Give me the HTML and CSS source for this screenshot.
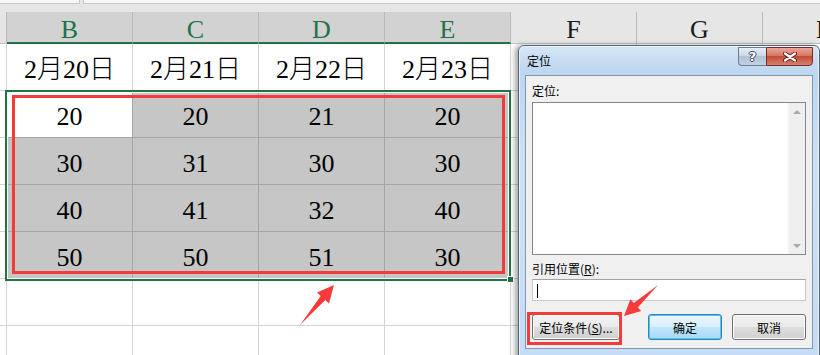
FILE: index.html
```html
<!DOCTYPE html>
<html lang="zh-CN">
<head>
    <meta charset="UTF-8">
    <title>定位</title>
    <link rel="stylesheet" href="styles.css">
</head>
<body>
    <!-- formula bar remains -->
    <div class="topbar">
        <div class="namebox"></div>
        <div class="formula"></div>
    </div>

    <!-- worksheet -->
    <div class="sheet">
        <div class="hd"></div>
        <div class="hd sel">B</div>
        <div class="hd sel">C</div>
        <div class="hd sel">D</div>
        <div class="hd sel">E</div>
        <div class="hd">F</div>
        <div class="hd">G</div>
        <div class="hd">H</div>

        <div class="c"></div>
        <div class="c date">2月20日</div>
        <div class="c date">2月21日</div>
        <div class="c date">2月22日</div>
        <div class="c date">2月23日</div>
        <div class="c"></div>
        <div class="c"></div>
        <div class="c"></div>

        <div class="c"></div>
        <div class="c on act">20</div>
        <div class="c on">20</div>
        <div class="c on">21</div>
        <div class="c on">20</div>
        <div class="c"></div>
        <div class="c"></div>
        <div class="c"></div>

        <div class="c"></div>
        <div class="c on">30</div>
        <div class="c on">31</div>
        <div class="c on">30</div>
        <div class="c on">30</div>
        <div class="c"></div>
        <div class="c"></div>
        <div class="c"></div>

        <div class="c"></div>
        <div class="c on">40</div>
        <div class="c on">41</div>
        <div class="c on">32</div>
        <div class="c on">40</div>
        <div class="c"></div>
        <div class="c"></div>
        <div class="c"></div>

        <div class="c"></div>
        <div class="c on">50</div>
        <div class="c on">50</div>
        <div class="c on">51</div>
        <div class="c on">30</div>
        <div class="c"></div>
        <div class="c"></div>
        <div class="c"></div>

        <div class="c"></div>
        <div class="c"></div>
        <div class="c"></div>
        <div class="c"></div>
        <div class="c"></div>
        <div class="c"></div>
        <div class="c"></div>
        <div class="c"></div>

        <div class="c"></div>
        <div class="c"></div>
        <div class="c"></div>
        <div class="c"></div>
        <div class="c"></div>
        <div class="c"></div>
        <div class="c"></div>
        <div class="c"></div>
    </div>

    <!-- selection frame over B3:E6 -->
    <div class="selection"></div>
    <div class="fill_handle"></div>
    <div class="mark range_mark"></div>

    <!-- Go To dialog -->
    <div class="dialog">
        <div class="titlebar">
            <span class="title">定位</span>
            <div class="caption_btns">
                <div class="help">?</div>
                <div class="close">
                    <svg width="14" height="10" viewBox="0 0 14 10">
                        <path d="M2 1.5 L12 8.5 M12 1.5 L2 8.5" stroke="#5a1d16" stroke-width="4" stroke-linecap="round"/>
                        <path d="M2 1.5 L12 8.5 M12 1.5 L2 8.5" stroke="#fff" stroke-width="2.2" stroke-linecap="round"/>
                    </svg>
                </div>
            </div>
        </div>
        <div class="client">
            <div class="label">定位:</div>
            <div class="listbox">
                <div class="list_area"></div>
                <div class="scroll">
                    <span class="arrow up"></span>
                    <span class="arrow down"></span>
                </div>
            </div>
            <div class="label second">引用位置(<u>R</u>):</div>
            <div class="textbox"><span class="caret"></span></div>
            <div class="buttons">
                <div class="btn wide">定位条件(<u>S</u>)...</div>
                <div class="btn ok">确定</div>
                <div class="btn">取消</div>
            </div>
        </div>
    </div>

    <div class="mark btn_mark"></div>

    <!-- annotation arrows -->
    <svg class="arrows" width="820" height="355" viewBox="0 0 820 355">
        <polygon points="300,325 325.3,300 329,303.5 334,285 317,292.5 320.7,296" fill="#f83a3a"/>
        <polygon points="658,285 637.8,307.4 641.2,311.1 624,316 630.4,299.3 633.8,303" fill="#f83a3a"/>
    </svg>
</body>
</html>
```

FILE: styles.css
```css
* {
    margin: 0;
    padding: 0;
    box-sizing: border-box;
}
body {
    width: 820px;
    height: 355px;
    overflow: hidden;
    position: relative;
    background: #fff;
    font-family: "Liberation Serif", "Noto Sans CJK SC", serif;
    color: #000;
}
/* formula bar strip */
.topbar {
    display: flex;
    height: 12px;
    background: #e6e6e6;
}
.topbar .namebox {
    width: 80px;
    height: 4px;
    background: #f7f7f7;
    border-right: 1px solid #c6c6c6;
    border-bottom: 1px solid #c6c6c6;
}
.topbar .formula {
    flex: 1;
    height: 4px;
    margin-left: 3px;
    background: #f7f7f7;
    border-left: 1px solid #c6c6c6;
    border-bottom: 1px solid #c6c6c6;
}
/* worksheet grid */
.sheet {
    display: grid;
    grid-template-columns: 7px repeat(7, 126px);
    grid-template-rows: 32px repeat(7, 47px);
}
.hd {
    background: #e6e6e6;
    border-right: 1px solid #bababa;
    border-bottom: 1px solid #c4c4c4;
    font-size: 26px;
    line-height: 28px;
    padding-top: 4px;
    text-align: center;
    color: #1a1a1a;
    overflow: hidden;
}
.hd.sel {
    background: #d2d2d2;
    color: #217346;
    border-bottom: 2px solid #217346;
}
.c {
    border-right: 1px solid #d4d4d4;
    border-bottom: 1px solid #d4d4d4;
    font-size: 26px;
    line-height: 40px;
    padding-top: 6px;
    text-align: center;
    white-space: nowrap;
}
.c.date {
    font-weight: 300;
}
.c.on {
    background: #c6c6c6;
    border-color: #a6a6a6;
}
.c.act {
    background: #fff;
}
/* selection */
.selection {
    position: absolute;
    left: 5px;
    top: 90px;
    width: 506px;
    height: 191px;
    border: 2px solid #217346;
    box-shadow: inset 0 0 0 1px #fff;
}
.fill_handle {
    position: absolute;
    left: 507px;
    top: 276px;
    width: 7px;
    height: 7px;
    background: #217346;
    border: 1px solid #fff;
}
/* red annotation boxes */
.mark {
    position: absolute;
    border: 3px solid #f23c3c;
}
.range_mark {
    left: 12px;
    top: 95px;
    width: 493px;
    height: 179px;
}
.btn_mark {
    left: 527px;
    top: 312px;
    width: 95px;
    height: 33px;
}
.arrows {
    position: absolute;
    left: 0;
    top: 0;
    pointer-events: none;
}
/* dialog window */
.dialog {
    position: absolute;
    left: 518px;
    top: 45px;
    width: 302px;
    height: 320px;
    padding: 0 6px;
    border: 1px solid #56677a;
    border-radius: 6px 6px 0 0;
    background: linear-gradient(to bottom, #d6e6f6 0, #c0d8f1 22px, #bdd7f2 30px, #cbe1f7 120px, #c4dcf5 100%);
    box-shadow: -3px 0 5px rgba(0, 0, 0, 0.35), inset 0 0 0 1px rgba(255, 255, 255, 0.6);
    font-family: "Noto Sans CJK SC", sans-serif;
    font-size: 12px;
}
.titlebar {
    height: 29px;
    display: flex;
    align-items: flex-start;
}
.titlebar .title {
    margin-top: 7px;
    padding-left: 2px;
    line-height: 16px;
    color: #000;
}
.caption_btns {
    margin-left: auto;
    margin-top: 1px;
    display: flex;
}
.help {
    width: 28px;
    height: 19px;
    border: 1px solid #6b7d91;
    border-right: none;
    border-radius: 0 0 0 4px;
    background: linear-gradient(to bottom, #e6eef7 0, #ccd8e6 45%, #b1c2d6 50%, #c2d1e2 100%);
    color: #fff;
    font-family: "DejaVu Sans", sans-serif;
    font-weight: bold;
    font-size: 13px;
    line-height: 17px;
    text-align: center;
    text-shadow: 1px 0 0 #39475a, -1px 0 0 #39475a, 0 1px 0 #39475a, 0 -1px 0 #39475a;
}
.close {
    width: 47px;
    height: 19px;
    border: 1px solid #7c2a22;
    border-radius: 0 0 4px 0;
    background: linear-gradient(to bottom, #eaa79b 0, #d87564 45%, #c44b36 50%, #d3826f 100%);
    display: flex;
    align-items: center;
    justify-content: center;
}
.client {
    height: 274px;
    background: #f0f0f0;
    border: 1px solid #8596a8;
    padding: 7px 6px 0;
    display: flex;
    flex-direction: column;
}
.label {
    line-height: 16px;
    color: #000;
}
.label.second {
    margin-top: 6px;
}
.listbox {
    margin-top: 3px;
    height: 153px;
    display: flex;
    background: #fff;
    border: 1px solid #828790;
}
.list_area {
    flex: 1;
}
.scroll {
    width: 17px;
    background: #efefef;
    border-left: 1px solid #f4f4f4;
    display: flex;
    flex-direction: column;
    justify-content: space-between;
    align-items: center;
    padding: 7px 0 6px;
}
.arrow {
    width: 0;
    height: 0;
    border-left: 4px solid transparent;
    border-right: 4px solid transparent;
}
.arrow.up {
    border-bottom: 4px solid #a9a9a9;
}
.arrow.down {
    border-top: 4px solid #a9a9a9;
}
.textbox {
    margin-top: 2px;
    height: 22px;
    background: #fff;
    border: 1px solid #c6c8cc;
    border-top-color: #a2a4a8;
    padding: 4px 0 0 4px;
}
.caret {
    display: block;
    width: 1px;
    height: 14px;
    background: #000;
}
.buttons {
    margin-top: 13px;
    display: flex;
    gap: 10px;
}
.btn {
    width: 74px;
    height: 26px;
    border: 1px solid #707070;
    border-radius: 3px;
    background: linear-gradient(to bottom, #f2f2f2 0, #ebebeb 48%, #dddddd 52%, #cfcfcf 100%);
    box-shadow: inset 0 0 0 1px #fbfbfb;
    display: flex;
    align-items: center;
    justify-content: center;
    color: #000;
}
.btn.wide {
    width: 88px;
    margin-right: auto;
}
.btn.ok {
    border-color: #3c7fb1;
    box-shadow: inset 0 0 0 1px #48c8f5;
    background: linear-gradient(to bottom, #eaf6fd 0, #d9f0fc 48%, #bee6fd 52%, #a7d9f5 100%);
}
```
